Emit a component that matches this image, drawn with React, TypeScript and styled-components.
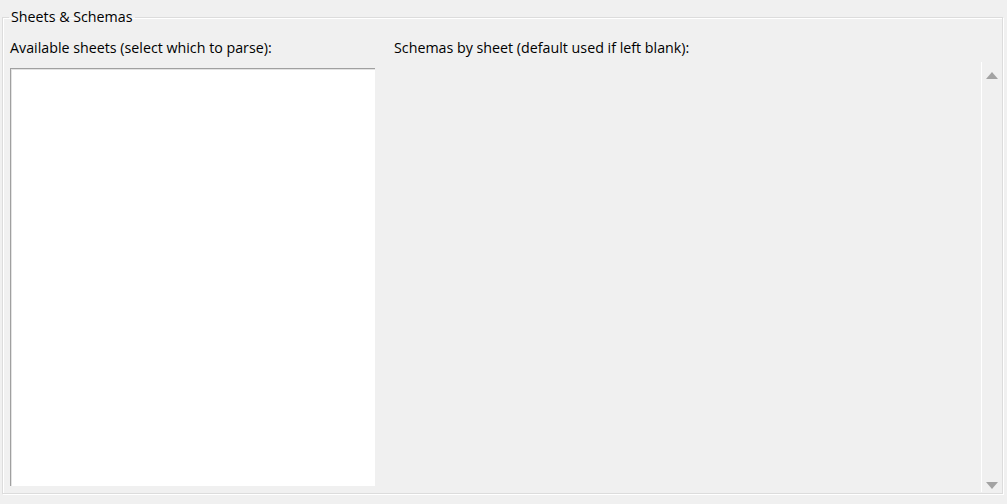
import React from "react";
import styled, { createGlobalStyle } from "styled-components";

const Global = createGlobalStyle`
  html, body {
    margin: 0;
    padding: 0;
    background: #f0f0f0;
  }
  body {
    font-family: "Segoe UI", "Open Sans", "Noto Sans", sans-serif;
    font-size: 14.25px;
    color: #000;
  }
  * { box-sizing: border-box; }
`;

const Page = styled.div`
  width: 1007px;
  height: 504px;
  padding: 8px 4px 10px 2px;
  display: flex;
  flex-direction: column;
`;

const GroupBox = styled.fieldset`
  flex: 1;
  min-height: 0;
  margin: 0;
  border: 1px solid #dcdcdc;
  box-shadow: inset 1px 1px 0 #ffffff, 1px 1px 0 #ffffff;
  padding: 12px 0 1px 7px;
  display: grid;
  grid-template-columns: 365px 1fr;
  grid-template-rows: auto 1fr;
  column-gap: 6px;
`;

const Legend = styled.legend`
  padding: 0 2px;
  margin-left: -1px;
  font-size: 14.25px;
  line-height: 18px;
`;

const Label = styled.div<{ $indent?: number }>`
  font-size: 14.25px;
  line-height: 19px;
  padding-left: ${(p) => p.$indent ?? 0}px;
`;

const ListBox = styled.div`
  background: #ffffff;
  border-top: 1px solid #a0a0a0;
  border-left: 1px solid #a0a0a0;
  box-shadow: inset 1px 1px 0 #e3e3e3;
  margin-top: 11px;
  margin-bottom: 6px;
`;

const ScrollArea = styled.div`
  display: flex;
  justify-content: flex-end;
  margin-top: 5px;
  margin-bottom: 0;
`;

const ScrollBar = styled.div`
  width: 21px;
  border-left: 1px solid #ffffff;
  display: flex;
  flex-direction: column;
  justify-content: space-between;
  align-items: center;
  padding: 10px 0 3px;
`;

const Arrow = styled.div<{ $down?: boolean }>`
  width: 0;
  height: 0;
  border-left: 6px solid transparent;
  border-right: 6px solid transparent;
  ${(p) =>
    p.$down
      ? "border-top: 7px solid #a3a3a3;"
      : "border-bottom: 7px solid #a3a3a3;"}
`;

export default function App() {
  return (
    <>
      <Global />
      <Page>
        <GroupBox>
          <Legend>Sheets &amp; Schemas</Legend>
          <Label>Available sheets (select which to parse):</Label>
          <Label $indent={13}>Schemas by sheet (default used if left blank):</Label>
          <ListBox />
          <ScrollArea>
            <ScrollBar>
              <Arrow />
              <Arrow $down />
            </ScrollBar>
          </ScrollArea>
        </GroupBox>
      </Page>
    </>
  );
}
